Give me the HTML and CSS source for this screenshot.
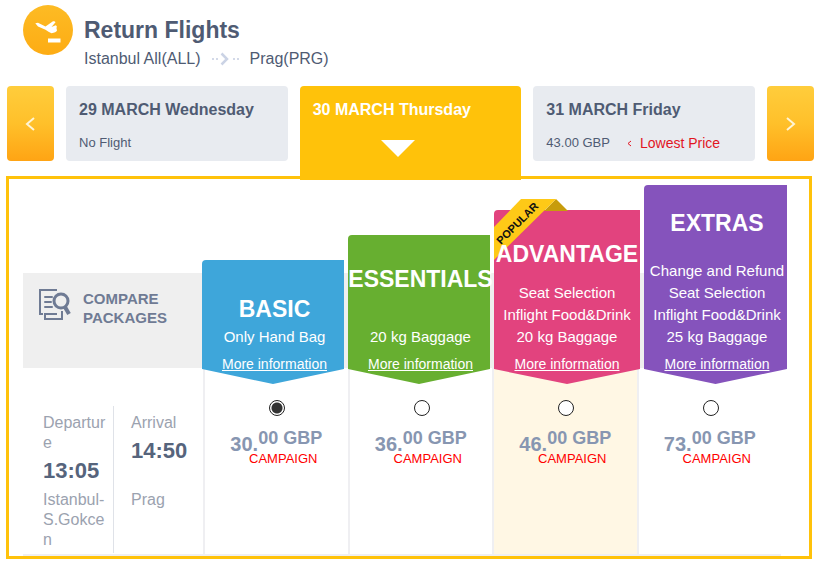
FILE: index.html
```html
<!DOCTYPE html>
<html lang="en">
<head>
  <meta charset="UTF-8">
  <meta name="viewport" content="width=device-width, initial-scale=1.0">
  <title>Return Flights</title>
  <link rel="stylesheet" href="styles.css">
</head>
<body>
  <header class="route">
    <svg class="route-icon" viewBox="0 0 50 50" aria-hidden="true">
      <defs>
        <linearGradient id="sun" x1="0" y1="0" x2="0" y2="1">
          <stop offset="0" stop-color="#fdbb24"/>
          <stop offset="1" stop-color="#fdac14"/>
        </linearGradient>
      </defs>
      <circle cx="25" cy="25" r="25" fill="url(#sun)"/>
      <path d="M12.300 18.200L15 17.800 22.500 21.500 30 16.300Q32 15.800 32.500 17.200L28.500 22 32.800 20.300Q34.500 21 33.500 23.200L34 25.500Q33 27.500 28.500 28.200 25.500 27 22.500 24.800L15 21.500Z" fill="#fff"/>
      <path d="M25 33.500h12.500v4H25z" fill="#fff"/>
    </svg>
    <div class="route-text">
      <h1>Return Flights</h1>
      <p class="route-cities">
        <span>Istanbul All(ALL)</span>
        <svg class="route-arrow" viewBox="0 0 29 14" aria-hidden="true">
          <path d="M1 7h2M5 7h2M22 7h2M26 7h2" stroke="#d3d9e8" stroke-width="2"/>
          <path d="M10.500 1.500L16 7l-5.500 5.500" fill="none" stroke="#cbd3e5" stroke-width="2.500"/>
        </svg>
        <span>Prag(PRG)</span>
      </p>
    </div>
  </header>

  <nav class="days">
    <button type="button" class="day-nav" aria-label="Previous day">
      <svg viewBox="0 0 12 16"><path d="M9 2L2 8l7 6"/></svg>
    </button>
    <button type="button" class="day">
      <strong>29 MARCH Wednesday</strong>
      <span class="day-price">No Flight</span>
    </button>
    <button type="button" class="day active">
      <strong>30 MARCH Thursday</strong>
      <span class="day-pointer"></span>
    </button>
    <button type="button" class="day">
      <strong>31 MARCH Friday</strong>
      <span class="day-price">43.00 GBP
        <span class="lowest"><svg viewBox="0 0 5 7"><path d="M4 1L1 3.500 4 6"/></svg>Lowest Price</span>
      </span>
    </button>
    <button type="button" class="day-nav" aria-label="Next day">
      <svg viewBox="0 0 12 16"><path d="M2 2l7 6-7 6"/></svg>
    </button>
  </nav>

  <main class="panel">
    <section class="packages">
      <div class="compare">
        <svg class="compare-icon" viewBox="0 0 32 32" aria-hidden="true">
          <g fill="none" stroke="#6f7b94" stroke-width="2">
            <path d="M18 1H1v24h3"/>
            <path d="M6 24v6h17v-8M5 25h13"/>
            <path d="M6 8h7M6 13h6M6 18h7" stroke-linecap="round"/>
            <circle cx="22" cy="12" r="7" stroke-width="3"/>
            <path d="M26 18l4 7" stroke-width="4"/>
          </g>
        </svg>
        <strong>COMPARE<br>PACKAGES</strong>
      </div>

      <div class="package basic">
        <h2>BASIC</h2>
        <ul>
          <li>Only Hand Bag</li>
        </ul>
        <a href="#">More information</a>
      </div>

      <div class="package essentials">
        <h2>ESSENTIALS</h2>
        <ul>
          <li>20 kg Baggage</li>
        </ul>
        <a href="#">More information</a>
      </div>

      <div class="package advantage">
        <svg class="popular" viewBox="0 0 74 62">
          <path d="M62 0l12 12H50z" fill="#c79c0c"/>
          <path d="M27 0h35L0 61V28z" fill="#fec917"/>
          <text x="26" y="27" text-anchor="middle" transform="rotate(-45 26 27)">POPULAR</text>
        </svg>
        <h2>ADVANTAGE</h2>
        <ul>
          <li>Seat Selection</li>
          <li>Inflight Food&amp;Drink</li>
          <li>20 kg Baggage</li>
        </ul>
        <a href="#">More information</a>
      </div>

      <div class="package extras">
        <h2>EXTRAS</h2>
        <ul>
          <li>Change and Refund</li>
          <li>Seat Selection</li>
          <li>Inflight Food&amp;Drink</li>
          <li>25 kg Baggage</li>
        </ul>
        <a href="#">More information</a>
      </div>
    </section>

    <section class="flight">
      <div class="times">
        <div class="stop departure">
          <span>Departure</span>
          <strong>13:05</strong>
          <span class="place">Istanbul-S.Gokcen</span>
        </div>
        <div class="stop arrival">
          <span>Arrival</span>
          <strong>14:50</strong>
          <span class="place">Prag</span>
        </div>
      </div>

      <div class="fare">
        <input type="radio" name="fare" id="fare-basic" checked>
        <label for="fare-basic">
          <span class="price"><b>30.</b><b class="cents">00 GBP</b></span>
          <span class="campaign">CAMPAIGN</span>
        </label>
      </div>
      <div class="fare">
        <input type="radio" name="fare" id="fare-essentials">
        <label for="fare-essentials">
          <span class="price"><b>36.</b><b class="cents">00 GBP</b></span>
          <span class="campaign">CAMPAIGN</span>
        </label>
      </div>
      <div class="fare highlight">
        <input type="radio" name="fare" id="fare-advantage">
        <label for="fare-advantage">
          <span class="price"><b>46.</b><b class="cents">00 GBP</b></span>
          <span class="campaign">CAMPAIGN</span>
        </label>
      </div>
      <div class="fare">
        <input type="radio" name="fare" id="fare-extras">
        <label for="fare-extras">
          <span class="price"><b>73.</b><b class="cents">00 GBP</b></span>
          <span class="campaign">CAMPAIGN</span>
        </label>
      </div>
    </section>
  </main>
</body>
</html>
```

FILE: styles.css
```css
* {
  box-sizing: border-box;
}

body {
  margin: 0;
  padding: 5px 11px 10px 6px;
  font-family: "Liberation Sans", Arial, sans-serif;
  color: #4f5b73;
  background: #fff;
}

h1, h2, p, ul {
  margin: 0;
  padding: 0;
}

/* Title */
.route {
  display: flex;
  gap: 11px;
  padding: 0 0 17px 17px;
}

.route-icon {
  width: 50px;
  height: 50px;
}

.route-text {
  padding-top: 11px;
}

h1 {
  font-size: 23px;
  line-height: 28px;
}

.route-cities {
  display: flex;
  align-items: center;
  gap: 10px;
  margin-top: 5px;
  font-size: 16px;
  line-height: 20px;
}

.route-arrow {
  width: 29px;
  height: 14px;
}

/* Day selector */
.days {
  display: flex;
  align-items: flex-start;
  gap: 12px;
  padding-left: 1px;
}

.days button {
  height: 75px;
  border: none;
  border-radius: 4px;
  font-family: inherit;
  cursor: pointer;
}

.day-nav {
  display: flex;
  align-items: center;
  justify-content: center;
  width: 47px;
  padding: 0;
  background: linear-gradient(#ffcd3c, #ffc02a 50%, #ffa414);
}

.day-nav svg {
  width: 12px;
  height: 16px;
  fill: none;
  stroke: #fff5d6;
  stroke-width: 2;
}

.day {
  flex: 1;
  display: flex;
  flex-direction: column;
  align-items: flex-start;
  padding: 14px 13px 0;
  background: #e8ebf0;
  color: #4f5b73;
  text-align: left;
}

.day strong {
  font-size: 16px;
  line-height: 20px;
}

.day-price {
  display: flex;
  gap: 17px;
  margin-top: 13px;
  font-size: 13px;
  line-height: 20px;
}

.lowest {
  display: flex;
  align-items: center;
  gap: 8px;
  font-size: 14px;
  color: #e2151f;
}

.lowest svg {
  width: 5px;
  height: 7px;
  fill: none;
  stroke: #e2151f;
}

.days .active {
  height: 94px;
  margin-bottom: -19px;
  border-radius: 4px 4px 0 0;
  background: #ffc20a;
  color: #fff;
}

.day-pointer {
  margin: 20px 0 0 68px;
  border: 17px solid transparent;
  border-top-color: #fff;
  border-bottom: none;
}

/* Results */
.panel {
  margin: 15px 2px 0 0;
  padding: 6px 22px 0 14px;
  border: 3px solid #ffc20a;
}

.packages {
  display: grid;
  grid-template-columns: 175px 142fr 142fr 146fr 143fr;
  gap: 4px;
  align-items: end;
  background: linear-gradient(#efefef, #efefef) bottom / 100% 95px no-repeat;
}

.compare {
  display: flex;
  gap: 12px;
  height: 95px;
  padding: 16px;
  font-size: 15px;
  line-height: 19px;
  color: #6f7b94;
}

.compare-icon {
  width: 32px;
  height: 32px;
}

.package {
  position: relative;
  z-index: 0;
  display: flex;
  flex-direction: column;
  align-items: center;
  min-width: 0;
  margin-bottom: -16px;
  padding: 30px 0 11px 3px;
  color: #fff;
  white-space: nowrap;
}

.package::before {
  content: "";
  position: absolute;
  inset: 0;
  z-index: -1;
  border-radius: 4px 0 0 0;
  background: var(--tone);
  clip-path: polygon(0 0, 100% 0, 100% calc(100% - 15px), 50% 100%, 0 calc(100% - 15px));
}

.basic {
  --tone: #3ea6da;
  height: 124px;
  padding-top: 35px;
}

.essentials {
  --tone: #67af30;
  height: 149px;
}

.advantage {
  --tone: #e2437e;
  height: 174px;
  padding-left: 0;
}

.extras {
  --tone: #8553bc;
  height: 199px;
  padding-top: 24px;
}

.package h2 {
  font-size: 23px;
  line-height: 28px;
}

.package ul {
  margin: auto 0 7px;
  list-style: none;
  font-size: 15px;
  line-height: 22px;
  text-align: center;
}

.package a {
  color: #fff;
  font-size: 14px;
  line-height: 18px;
}

.popular {
  position: absolute;
  top: -11px;
  left: 0;
  z-index: -1;
  width: 74px;
  height: 62px;
}

.popular text {
  font: bold 11px "Liberation Sans", Arial, sans-serif;
  fill: #111;
}

.flight {
  display: grid;
  grid-template-columns: 180px repeat(4, 1fr);
  margin-right: 6px;
  border-bottom: 2px solid #efeff2;
}

.times {
  display: flex;
  padding: 38px 0 1px 20px;
  font-size: 16px;
  line-height: 20px;
  color: #9ba2af;
}

.stop {
  display: flex;
  flex-direction: column;
  padding: 7px 0 3px;
}

.stop strong {
  margin-top: 4px;
  font-size: 22px;
  line-height: 28px;
  color: #56647c;
}

.departure {
  width: 71px;
  padding-right: 7px;
  border-right: 1px solid #dfe2e8;
  word-break: break-all;
}

.arrival {
  padding-left: 17px;
}

.place {
  min-height: 60px;
  margin-top: auto;
}

.departure .place {
  margin-top: 5px;
}

.fare {
  display: flex;
  flex-direction: column;
  align-items: center;
  padding-top: 32px;
  border-left: 2px solid #efeff2;
}

.highlight {
  background: #fff7e4;
}

.fare input {
  appearance: none;
  width: 16px;
  height: 16px;
  margin: 0 0 12px 2px;
  border: 1px solid #222;
  border-radius: 50%;
  background: #fff;
}

.fare input:checked {
  background: radial-gradient(circle, #333 5px, #fff 6px);
}

.price {
  display: flex;
  align-items: flex-start;
  color: #8796b1;
}

.price b {
  padding-top: 4px;
  font-size: 20px;
  line-height: 24px;
}

.price .cents {
  padding-top: 0;
  font-size: 18px;
  line-height: 20px;
}

.campaign {
  display: block;
  margin-top: -5px;
  padding-left: 14px;
  font-size: 13px;
  line-height: 15px;
  text-align: center;
  color: #f00;
}
```
